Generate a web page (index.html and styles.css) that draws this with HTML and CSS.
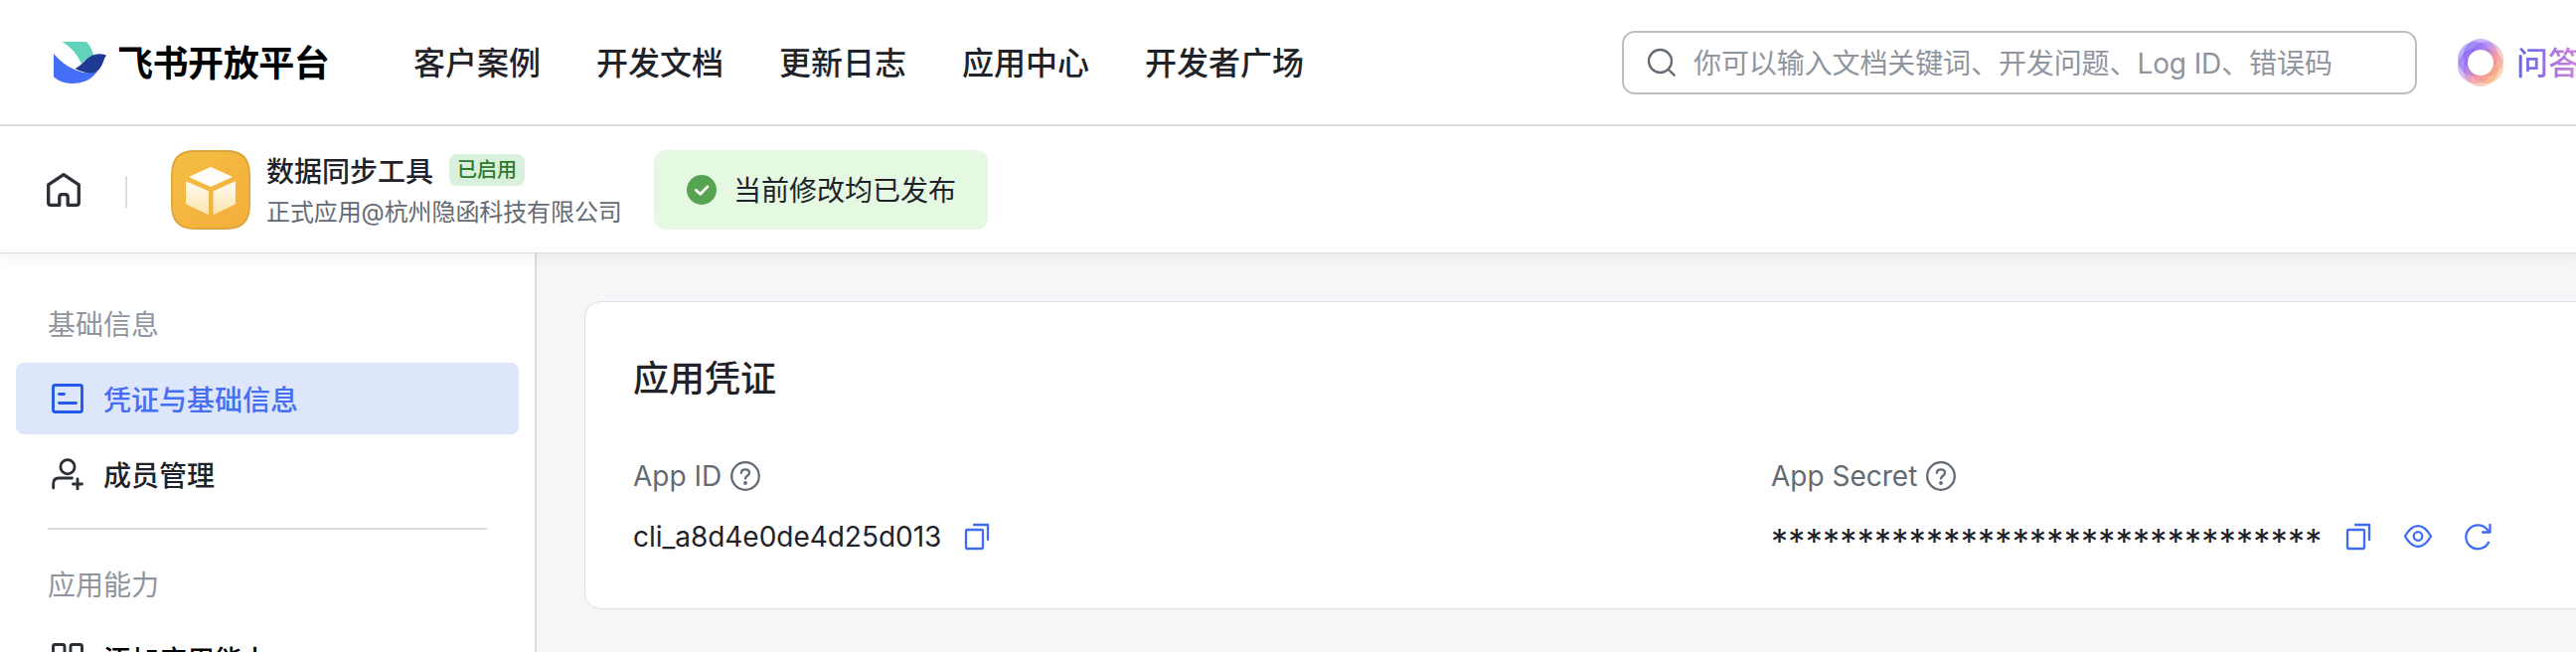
FILE: index.html
```html
<!DOCTYPE html>
<html lang="zh-CN">
<head>
<meta charset="utf-8">
<title>飞书开放平台</title>
<link rel="stylesheet" href="styles.css">
</head>
<body>
<header class="topbar">
  <a class="brand">
    <svg class="brand-mark" width="54" height="42" viewBox="0 0 54 42">
      <path d="M8.500 0H33Q38.500 6 40 13.500Q33 16 28 22Q22 8 8.500 0Z" fill="#62d3bb"/>
      <path d="M0 12Q9 23 22 28.500Q34 33.500 44 29.500Q36 42 18 42Q7 41.500 0 35.500Z" fill="#446ef7"/>
      <path d="M53 13.500Q41 9.500 32 18.500Q26 25 21.500 27Q34 33.500 42.500 30.500Q47 28 50 20Q51 16.500 53 13.500Z" fill="#1f3a93"/>
    </svg>
    <span class="brand-name">飞书开放平台</span>
  </a>
  <nav class="nav">
    <a>客户案例</a><a>开发文档</a><a>更新日志</a><a>应用中心</a><a>开发者广场</a>
  </nav>
  <div class="search">
    <svg width="30" height="30" viewBox="0 0 30 30" fill="none" stroke="#646a73" stroke-width="2.300" stroke-linecap="round">
      <circle cx="13.500" cy="13.500" r="11.500"/><path d="M21.800 22L27.700 27.700"/>
    </svg>
    <span class="search-hint">你可以输入文档关键词、开发问题、Log ID、错误码</span>
  </div>
  <a class="ask">
    <svg width="48" height="48" viewBox="0 0 48 48">
      <defs>
        <linearGradient id="ring" gradientUnits="userSpaceOnUse" x1="7" y1="8" x2="42" y2="40">
          <stop offset="0" stop-color="#6a50f6"/><stop offset=".35" stop-color="#9a68f0"/>
          <stop offset=".62" stop-color="#ee8598"/><stop offset="1" stop-color="#f8a558"/>
        </linearGradient>
        <mask id="hole"><path fill="#fff" d="M0 0H48V48H0Z"/><circle cx="24" cy="24" r="13" fill="#000"/></mask>
      </defs>
      <g mask="url(#hole)" fill="url(#ring)" fill-opacity=".45">
        <circle cx="24" cy="17.500" r="17.500"/><circle cx="29.500" cy="20.500" r="17.500"/><circle cx="29.500" cy="27.500" r="17.500"/>
        <circle cx="24" cy="30.500" r="17.500"/><circle cx="18.500" cy="27.500" r="17.500"/><circle cx="18.500" cy="20.500" r="17.500"/>
      </g>
    </svg>
    <span class="ask-label">问答</span>
  </a>
</header>

<section class="appbar">
  <svg class="home" width="36" height="36" viewBox="0 0 36 36" fill="none" stroke="#2b2f36" stroke-width="3.300" stroke-linejoin="round">
    <path d="M2.700 12.800L18 2.700L33.300 12.800V31Q33.300 33.300 31 33.300H22.200V25.500Q22.200 22.700 19.600 22.700H16.400Q13.800 22.700 13.800 25.500V33.300H5Q2.700 33.300 2.700 31Z"/>
  </svg>
  <span class="bar-sep"></span>
  <svg class="app-icon" width="80" height="80" viewBox="0 0 80 80">
    <defs>
      <linearGradient id="gold" x1="0" y1="0" x2="1" y2="1"><stop offset="0" stop-color="#f5be43"/><stop offset="1" stop-color="#f3ae3c"/></linearGradient>
      <linearGradient id="face" x1="0" y1="0" x2="0" y2="1"><stop offset="0" stop-color="#fffaf0"/><stop offset="1" stop-color="#fce5b0"/></linearGradient>
    </defs>
    <path d="M1 24Q1 1 24 1H56Q79 1 79 24V56Q79 79 56 79H24Q1 79 1 56Z" fill="url(#gold)" stroke="#dca63a" stroke-width="1.800"/>
    <path d="M40 17.500L61 27L40 36.500L19 27Z" fill="#fffdfa" stroke="#fffdfa" stroke-width="1" stroke-linejoin="round"/>
    <path d="M15.500 32L37.500 41.500V64.500L15.500 54Z" fill="url(#face)" stroke="url(#face)" stroke-linejoin="round"/>
    <path d="M64.500 32L43 41.500V64.500L64.500 54Z" fill="url(#face)" stroke="url(#face)" stroke-linejoin="round"/>
  </svg>
  <div class="app-info">
    <div class="app-title"><span class="app-name">数据同步工具</span><span class="tag">已启用</span></div>
    <div class="app-sub">正式应用@杭州隐函科技有限公司</div>
  </div>
  <div class="release">
    <svg width="30" height="30" viewBox="0 0 30 30"><circle cx="15" cy="15" r="15" fill="#56a351"/><path d="M9.300 15.200L13.600 19.300L21 11.800" fill="none" stroke="#fff" stroke-width="2.700" stroke-linecap="round" stroke-linejoin="round"/></svg>
    <span class="release-text">当前修改均已发布</span>
  </div>
</section>

<div class="body">
  <aside class="sidebar">
    <h3 class="group">基础信息</h3>
    <a class="item active">
      <svg width="32" height="32" viewBox="0 0 32 32" fill="none" stroke="#245bea" stroke-width="2.900" stroke-linecap="round">
        <rect x="1.500" y="2.500" width="29" height="27" rx="2"/><path d="M7.500 11.500H12.500M7.500 20.500H24.500"/>
      </svg>
      <span class="item-text">凭证与基础信息</span>
    </a>
    <a class="item">
      <svg width="32" height="32" viewBox="0 0 32 32" fill="none" stroke="#2b2f36" stroke-width="2.800" stroke-linecap="round">
        <circle cx="16" cy="8.700" r="7.100"/><path d="M1.700 30V25.500Q1.700 20 7.200 20H20.500M21.500 26H30.500M26 21V31"/>
      </svg>
      <span class="item-text">成员管理</span>
    </a>
    <hr class="line">
    <h3 class="group second">应用能力</h3>
    <a class="item strong">
      <svg width="32" height="32" viewBox="0 0 32 32" fill="none" stroke="#2b2f36" stroke-width="2.900">
        <rect x="1.500" y="1.500" width="11.500" height="11.500" rx="2"/><rect x="19" y="1.500" width="11.500" height="11.500" rx="2"/>
        <rect x="1.500" y="19" width="11.500" height="11.500" rx="2"/><rect x="19" y="19" width="11.500" height="11.500" rx="2"/>
      </svg>
      <span class="item-text">添加应用能力</span>
    </a>
  </aside>
  <main class="main">
    <section class="card">
      <h2 class="card-title">应用凭证</h2>
      <div class="fields">
        <div class="field">
          <div class="label"><span>App ID</span>
            <svg width="30" height="30" viewBox="0 0 30 30" fill="none" stroke="#646a73" stroke-width="2.300" stroke-linecap="round"><circle cx="15" cy="15" r="13.800"/><path d="M10.900 11.800C11.200 7.200 19 7.400 19 11.800C19 14.800 15 14.600 15 17.500"/><circle cx="15" cy="22" r="1.900" fill="#646a73" stroke="none"/></svg>
          </div>
          <div class="value"><span class="app-id">cli_a8d4e0de4d25d013</span>
            <svg width="28" height="28" viewBox="0 0 28 28" fill="none" stroke="#3f6cf2" stroke-width="2.300" stroke-linejoin="round" stroke-linecap="round"><rect x="3" y="7" width="17" height="19" rx="1"/><path d="M11 2H25V17"/></svg>
          </div>
        </div>
        <div class="field">
          <div class="label"><span>App Secret</span>
            <svg width="30" height="30" viewBox="0 0 30 30" fill="none" stroke="#646a73" stroke-width="2.300" stroke-linecap="round"><circle cx="15" cy="15" r="13.800"/><path d="M10.900 11.800C11.200 7.200 19 7.400 19 11.800C19 14.800 15 14.600 15 17.500"/><circle cx="15" cy="22" r="1.900" fill="#646a73" stroke="none"/></svg>
          </div>
          <div class="value"><span class="stars">********************************</span>
            <svg width="28" height="28" viewBox="0 0 28 28" fill="none" stroke="#3f6cf2" stroke-width="2.300" stroke-linejoin="round" stroke-linecap="round"><rect x="3" y="7" width="17" height="19" rx="1"/><path d="M11 2H25V17"/></svg>
            <svg class="action" width="30" height="28" viewBox="0 0 30 28" fill="none" stroke="#3f6cf2" stroke-width="2.300" stroke-linejoin="round"><path d="M2 13.500Q8 3.200 15 3.200T28 13.500Q22 24 15 24T2 13.500Z"/><circle cx="15" cy="13.500" r="4.300"/></svg>
            <svg class="action" width="28" height="28" viewBox="0 0 28 28" fill="none" stroke="#3f6cf2" stroke-width="2.300" stroke-linecap="round" stroke-linejoin="round"><path d="M25 19.800A12 12 0 1 1 24 7.200L25.500 9.200M26.500 2V9.500H19"/></svg>
          </div>
        </div>
      </div>
    </section>
  </main>
</div>
</body>
</html>
```
FILE: styles.css
```css
* { box-sizing: border-box; }
body {
  margin: 0;
  width: 2592px;
  height: 656px;
  overflow: hidden;
  display: flex;
  flex-direction: column;
  background: #fff;
  color: #1f2329;
  font-family: "Inter", "Noto Sans CJK SC", sans-serif;
  font-size: 28px;
  line-height: 40px;
  white-space: nowrap;
}
svg { display: block; flex: none; }
h2, h3 { margin: 0; }

.topbar {
  flex: none;
  height: 127px;
  border-bottom: 2px solid #dededf;
  display: flex;
  align-items: center;
  padding-left: 54px;
  overflow: hidden;
}
.brand { display: flex; align-items: center; gap: 10px; width: 362px; flex: none; }
.brand-name { font-size: 36px; font-weight: 700; color: #000; letter-spacing: -.45px; padding-top: 2px; }
.nav { display: flex; gap: 56px; font-size: 32px; font-weight: 500; width: 1216px; flex: none; padding-top: 3px; }
.search {
  flex: none;
  width: 800px;
  height: 64px;
  border: 2px solid #bbbfc4;
  border-radius: 13px;
  display: flex;
  align-items: center;
  gap: 17px;
  padding-left: 23px;
  color: #8f959e;
}
.search-hint { padding-top: 2px; letter-spacing: -.1px; }
.ask { display: flex; align-items: center; flex: none; margin-left: 40px; gap: 12px; }
.ask-label {
  font-size: 32px;
  font-weight: 500;
  padding-top: 3px;
  background: linear-gradient(90deg, #6064ee, #d882d8);
  -webkit-background-clip: text;
  background-clip: text;
  color: transparent;
}

.appbar {
  flex: none;
  height: 128px;
  border-bottom: 1px solid #dcdddf;
  box-shadow: 0 6px 14px rgba(31, 35, 41, .05);
  position: relative;
  background: #fff;
  display: flex;
  align-items: center;
  padding-left: 46px;
}
.bar-sep { width: 2px; height: 32px; background: #dcdddf; margin: 4px 44px 0; }
.app-info { margin-left: 16px; width: 390px; padding-top: 5px; }
.app-title { display: flex; align-items: center; gap: 16px; height: 40px; font-weight: 500; }
.tag {
  height: 32px;
  line-height: 33px;
  margin-bottom: 4px;
  padding: 0 8px;
  border-radius: 8px;
  background: #d9f0dc;
  color: #2f7a2c;
  font-size: 20px;
}
.app-sub { font-size: 24px; color: #646a73; height: 40px; line-height: 42px; letter-spacing: -.1px; }
.release {
  width: 336px;
  height: 80px;
  border-radius: 12px;
  background: #e5f8e1;
  display: flex;
  align-items: center;
  gap: 17px;
  padding-left: 33px;
}
.release-text { padding-top: 2px; }

.body { flex: 1; display: flex; min-height: 0; overflow: hidden; }
.sidebar {
  flex: none;
  width: 540px;
  border-right: 2px solid #dbdde0;
  padding: 52px 16px 0;
}
.group { font-size: 28px; font-weight: 400; color: #8f959e; padding-left: 32px; margin-bottom: 18px; }
.second { margin-top: 36px; }
.item {
  display: flex;
  align-items: center;
  gap: 20px;
  height: 72px;
  padding-left: 36px;
  border-radius: 8px;
  margin-bottom: 4px;
  font-weight: 500;
}
.item-text { padding-top: 3px; }
.active { background: #dee6fb; color: #456ff3; }
.strong { color: #000; }
.line { border: 0; height: 2px; background: #dbdcde; margin: 18px 32px 0; }

.main { flex: 1; min-width: 0; background: #f5f6f8; padding: 48px 0 0 48px; overflow: hidden; }
.card {
  width: 2400px;
  height: 310px;
  background: #fff;
  border: 1px solid #dee0e3;
  border-radius: 16px;
  padding: 51px 48px 0;
}
.card-title { font-size: 36px; line-height: 52px; font-weight: 500; }
.fields { display: flex; margin-top: 52px; }
.field { width: 1145px; flex: none; }
.label { display: flex; align-items: center; gap: 9px; color: #646a73; }
.value { display: flex; align-items: center; margin-top: 21px; gap: 22px; }
.app-id { letter-spacing: -.03px; }
.stars { font-size: 34px; width: 555px; letter-spacing: .3px; transform: translateY(5px); }
.action { margin-left: 9px; }
```
